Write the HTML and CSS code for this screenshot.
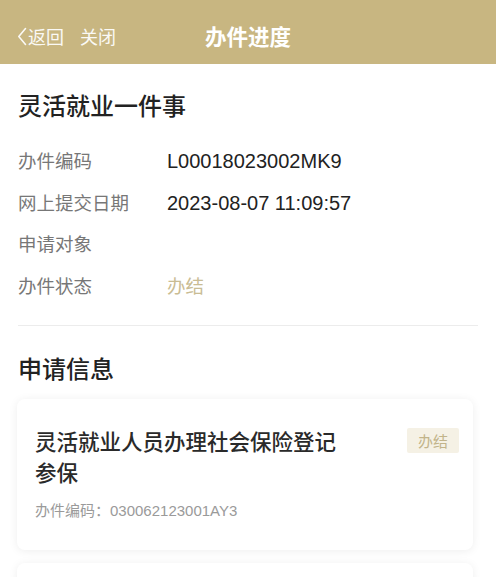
FILE: index.html
```html
<!DOCTYPE html>
<html lang="zh">
<head>
<meta charset="utf-8">
<link rel="stylesheet" href="styles.css">
</head>
<body>
<header class="nav">
  <div class="nav-left">
    <span class="back">
      <svg class="chev" width="10" height="19" viewBox="0 0 10 19"><polyline points="8.5,1.5 1.8,9.5 8.5,17.5" fill="none" stroke="#fff" stroke-width="1.6" stroke-linecap="round" stroke-linejoin="round"/></svg>返回
    </span>
    <span class="close">关闭</span>
  </div>
  <div class="nav-title">办件进度</div>
</header>
<main class="content">
  <h1 class="sec-title first">灵活就业一件事</h1>
  <div class="rows">
    <div class="row"><span class="label">办件编码</span><span class="value">L00018023002MK9</span></div>
    <div class="row"><span class="label">网上提交日期</span><span class="value">2023-08-07 11:09:57</span></div>
    <div class="row"><span class="label">申请对象</span><span class="value"></span></div>
    <div class="row"><span class="label">办件状态</span><span class="value status">办结</span></div>
  </div>
  <div class="divider"></div>
  <h2 class="sec-title second">申请信息</h2>
  <div class="card">
    <div class="card-head">
      <div class="card-title">灵活就业人员办理社会保险登记参保</div>
      <span class="badge">办结</span>
    </div>
    <div class="card-code">办件编码：030062123001AY3</div>
  </div>
  <div class="card card-next"></div>
</main>
</body>
</html>
```
FILE: styles.css
```css
* { box-sizing: border-box; }
html, body { margin: 0; padding: 0; }
body {
  width: 496px;
  height: 577px;
  overflow: hidden;
  background: #fff;
  font-family: "Noto Sans CJK SC", "Noto Sans", sans-serif;
  color: #222;
}
.nav {
  height: 64px;
  background: #c8b681;
  position: relative;
  display: flex;
  align-items: center;
  padding: 0 0 0 17px;
}
.nav-left {
  display: flex;
  align-items: center;
  gap: 16px;
  color: #fff;
  font-size: 18px;
  padding-top: 8px;
  opacity: 0.92;
}
.back { display: flex; align-items: center; }
.chev { margin-right: 1px; }
.nav-title {
  position: absolute;
  left: 0; right: 0;
  top: 6px; bottom: 0;
  display: flex;
  align-items: center;
  justify-content: center;
  color: #fff;
  font-size: 21.5px;
  font-weight: 700;
  pointer-events: none;
}
.content { padding: 0 18px 0 18px; }
.sec-title {
  margin: 0;
  font-size: 24px;
  line-height: 32px;
  font-weight: 500;
  color: #222;
}
.sec-title.first { padding-top: 25px; }
.rows { margin-top: 18px; }
.row {
  height: 41.7px;
  display: flex;
  align-items: baseline;
  padding-top: 8px;
  font-size: 18.5px;
  line-height: 26px;
}
.label { width: 149px; color: #777; }
.value { color: #222; font-family: "Liberation Sans", "Noto Sans CJK SC", sans-serif; font-size: 20px; }
.value.status { color: #c9bc94; font-family: "Noto Sans CJK SC", sans-serif; font-size: 18.5px; }
.divider { height: 1px; background: #ececec; margin-top: 19px; }
.sec-title.second { margin-top: 26px; }
.card {
  margin: 15px 5px 0 -1px;
  background: #fff;
  border-radius: 8px;
  box-shadow: 0 1px 10px rgba(0,0,0,0.07);
  padding: 26px 14px 29px 18px;
}
.card-head { display: flex; justify-content: space-between; align-items: flex-start; }
.card-title {
  max-width: 320px;
  font-size: 21.5px;
  line-height: 31px;
  font-weight: 500;
  color: #2a2a2a;
}
.badge {
  margin-top: 3px;
  height: 25px;
  width: 52px;
  display: flex;
  align-items: center;
  justify-content: center;
  background: #f5f1e5;
  color: #c2b48a;
  font-size: 15px;
  border-radius: 2px;
}
.card-code {
  margin-top: 14px;
  font-family: "Liberation Sans", "Noto Sans CJK SC", sans-serif;
  font-size: 15px;
  line-height: 20px;
  color: #9a9a9a;
}
.card-next { margin-top: 13px; height: 60px; }
```
